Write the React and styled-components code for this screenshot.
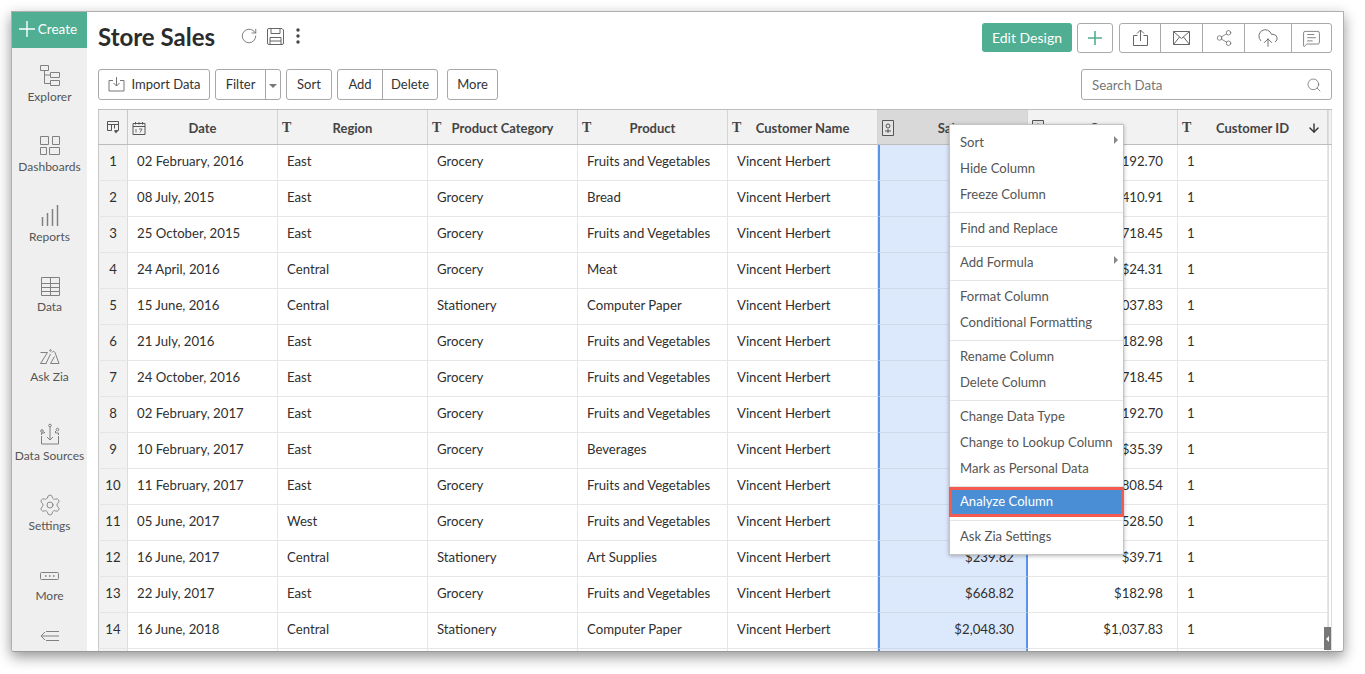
import styled, { createGlobalStyle } from "styled-components";
import {
  RotateCw,
  Search,
  Share2,
  CloudUpload,
  MessageSquareText,
  Settings,
  ArrowDown,
} from "lucide-react";

const GlobalStyle = createGlobalStyle`
  html, body {
    margin: 0;
    background: #fff;
    font-family: Lato, "Open Sans", sans-serif;
    color: #2f2f2f;
  }
  * { box-sizing: border-box; }
`;

const Page = styled.div`
  width: 1365px;
  height: 674px;
  padding: 11px 21px 22px 11px;
  overflow: hidden;
`;

const Window = styled.div`
  display: flex;
  width: 1333px;
  height: 641px;
  border: 1px solid #b0b0b0;
  border-bottom-color: #999;
  border-radius: 0 0 3px 3px;
  background: #fff;
  box-shadow: 0 5px 14px rgba(0, 0, 0, 0.42);
  overflow: hidden;
`;

const Sidebar = styled.aside`
  flex: 0 0 75px;
  display: flex;
  flex-direction: column;
  align-items: stretch;
  background: #efefef;
`;

const CreateButton = styled.div`
  height: 36px;
  margin-bottom: 14px;
  display: flex;
  align-items: center;
  justify-content: center;
  gap: 3px;
  padding: 0 3px 2px 0;
  background: #50ae92;
  color: #fff;
  font-size: 13.5px;
`;

const NavItem = styled.div`
  height: 70px;
  margin-top: ${(p) => p.$gap || 0}px;
  display: flex;
  flex-direction: column;
  align-items: center;
  padding-top: 2px;
  color: #555;
  font-size: 12px;
  white-space: nowrap;
  svg { display: block; height: 24px; }
  span { margin-top: 1px; line-height: 15px; }
`;

const CollapseItem = styled.div`
  display: flex;
  justify-content: center;
  margin-top: -2px;
`;

const Main = styled.main`
  position: relative;
  flex: 1;
  min-width: 0;
  padding: 0 11px;
  overflow: hidden;
`;

const TopBar = styled.div`
  height: 57px;
  display: flex;
  align-items: flex-start;
`;

const Title = styled.h1`
  margin: 11px 0 0;
  font-size: 24px;
  line-height: 28px;
  font-weight: 700;
  color: #2b2b2b;
`;

const TitleIcons = styled.div`
  display: flex;
  align-items: center;
  gap: 9px;
  margin: 14px 0 0 25px;
  height: 20px;
  color: #666;
`;

const DotsSlot = styled.span`
  display: flex;
  margin-left: 3px;
`;

const TopActions = styled.div`
  margin-left: auto;
  display: flex;
  padding-top: 11px;
`;

const EditButton = styled.div`
  width: 90px;
  height: 29px;
  margin-right: 5px;
  display: flex;
  align-items: center;
  justify-content: center;
  border-radius: 3px;
  background: #50ae92;
  color: #fff;
  font-size: 14px;
`;

const PlusButton = styled.div`
  width: 36px;
  height: 30px;
  margin-right: 6px;
  display: flex;
  align-items: center;
  justify-content: center;
  border: 1px solid #aaa;
  border-radius: 3px;
`;

const IconGroup = styled.div`
  display: flex;
  height: 30px;
  border: 1px solid #aaa;
  border-radius: 3px;
`;

const IconCell = styled.div`
  width: ${(p) => p.$w}px;
  display: flex;
  align-items: center;
  justify-content: center;
  color: #666;
  & + & { border-left: 1px solid #aaa; }
`;

const Toolbar = styled.div`
  height: 31px;
  display: flex;
  margin-bottom: 9px;
`;

const ButtonGroup = styled.div`
  display: flex;
  height: 31px;
  margin-right: ${(p) => p.$after ?? 5}px;
  border: 1px solid #a8a8a8;
  border-radius: 3px;
`;

const ToolButton = styled.div`
  width: ${(p) => p.$w}px;
  display: flex;
  align-items: center;
  justify-content: center;
  gap: 7px;
  padding-bottom: 1px;
  font-size: 13px;
  color: #333;
  & + & { border-left: 1px solid #a8a8a8; }
`;

const CaretDown = styled.i`
  width: 0;
  height: 0;
  margin-top: 3px;
  border-left: 4px solid transparent;
  border-right: 4px solid transparent;
  border-top: 4px solid #777;
`;

const SearchBox = styled.div`
  width: 251px;
  height: 31px;
  margin-left: auto;
  display: flex;
  align-items: center;
  justify-content: space-between;
  padding: 0 9px 0 10px;
  border: 1px solid #a8a8a8;
  border-radius: 3px;
  color: #777;
  font-size: 13.3px;
`;

const columns = "30px repeat(8, 150px) 4px";

const Table = styled.div`
  width: 1234px;
  border-left: 1px solid #c8c8c8;
`;

const HeaderRow = styled.div`
  display: grid;
  grid-template-columns: ${columns};
  height: 36px;
  margin-left: -1px;
  border-top: 1px solid #bdbdbd;
  border-bottom: 1px solid #bdbdbd;
  background: #f2f2f2;
`;

const HeaderCell = styled.div`
  display: grid;
  grid-template-columns: 1fr auto 1fr;
  align-items: center;
  padding: 1px 4px 0 4px;
  border-right: 1px solid #d4d4d4;
  background: ${(p) => (p.$selected ? "#d9d9d9" : "#f2f2f2")};
  font-size: 13px;
  font-weight: 700;
  color: #444;
`;

const HeaderLabel = styled.span`
  white-space: nowrap;
  text-align: center;
`;

const TypeMark = styled.span`
  font-family: "Liberation Serif", serif;
  font-size: 14px;
  font-weight: 700;
  color: #444;
  line-height: 1;
`;

const ArrowSlot = styled.span`
  display: flex;
  justify-content: flex-end;
  padding-right: 2px;
  color: #333;
`;

const IndexHead = styled.div`
  display: flex;
  align-items: center;
  justify-content: center;
  border-left: 1px solid #c8c8c8;
  border-right: 1px solid #c8c8c8;
  background: #f2f2f2;
`;

const Row = styled.div`
  display: grid;
  grid-template-columns: ${columns};
  height: 36px;
  margin-left: -1px;
`;

const Cell = styled.div`
  display: flex;
  align-items: center;
  justify-content: ${(p) => (p.$right ? "flex-end" : "flex-start")};
  padding: 0 ${(p) => (p.$right ? 14 : 0)}px 4px ${(p) => (p.$right ? 0 : 9)}px;
  border-right: 1px solid #e6e6e6;
  border-bottom: 1px solid #e6e6e6;
  font-size: 13.2px;
  white-space: nowrap;
  color: #2f2f2f;
`;

const SelectedCell = styled(Cell)`
  background: #dce8fb;
  border-left: 2px solid #5b93e6;
  border-right: 2px solid #5b93e6;
  border-bottom-color: #cfd9ea;
  padding-right: 12px;
`;

const IndexCell = styled.div`
  display: flex;
  align-items: center;
  justify-content: center;
  padding-bottom: 4px;
  border-left: 1px solid #c8c8c8;
  border-right: 1px solid #ddd;
  border-bottom: 1px solid #e6e6e6;
  background: #f2f2f2;
  font-size: 13.2px;
  color: #2f2f2f;
`;

const EdgeCell = styled.div`
  border-right: 1px solid #ddd;
  border-left: 1px solid #ddd;
`;

const Menu = styled.div`
  position: absolute;
  left: 862px;
  top: 112px;
  z-index: 5;
  width: 175px;
  padding: 4px 0 5px;
  background: #fff;
  border: 1px solid #c4c4c4;
  box-shadow: 0 1px 4px rgba(0, 0, 0, 0.28);
`;

const MenuItem = styled.div`
  position: relative;
  height: 26px;
  display: flex;
  align-items: center;
  padding: 0 0 0 10px;
  font-size: 13.1px;
  color: #555;
  white-space: nowrap;
`;

const SubCaret = styled.i`
  position: absolute;
  right: 5px;
  top: 7px;
  width: 0;
  height: 0;
  border-top: 4px solid transparent;
  border-bottom: 4px solid transparent;
  border-left: 4px solid #888;
`;

const MenuDivider = styled.div`
  height: 1px;
  margin: ${(p) => p.$top ?? 5}px 0 2px;
  background: #e4e4e4;
`;

const ActiveItem = styled.div`
  height: 30px;
  margin: -2px -1px 0;
  display: flex;
  align-items: center;
  padding: 0 0 2px 8px;
  background: #4a8fd6;
  border: 3px solid #f45b50;
  color: #fff;
  font-size: 13.1px;
`;

const SplitHandle = styled.div`
  position: absolute;
  right: 12px;
  bottom: 1px;
  width: 7px;
  height: 23px;
  display: flex;
  align-items: center;
  justify-content: center;
  background: #777;
  &::before {
    content: "";
    border-top: 3px solid transparent;
    border-bottom: 3px solid transparent;
    border-right: 3px solid #fff;
  }
`;

const line = { fill: "none", stroke: "#808080", strokeWidth: 1 };

const ExplorerIcon = () => (
  <svg width="22" height="24" viewBox="0 0 22 24" {...line}>
    <path d="M1.5 1.5h8v5h-8zM11.5 8.5h9v5h-9zM11.5 16.5h9v5h-9zM5.5 6.5v13h6M5.5 11h6" />
  </svg>
);
const DashboardIcon = () => (
  <svg width="22" height="24" viewBox="0 0 22 24" {...line}>
    <path d="M1.5 2.5h8v8h-8zM13.5 2.5h7v8h-7zM1.5 13.5h6v7h-6zM10.5 13.5h10v7h-10z" />
  </svg>
);
const ReportsIcon = () => (
  <svg width="22" height="24" viewBox="0 0 22 24" {...line} strokeWidth="1.5">
    <path d="M3.500 22v-9M8.500 22V9M13.500 22V5M18.500 22V1" />
  </svg>
);
const DataIcon = () => (
  <svg width="22" height="24" viewBox="0 0 22 24" {...line}>
    <path d="M2.500 3.500h18v18h-18zM2.500 9.500h18M2.500 13.500h18M2.500 17.500h18M11.500 3.500v18" />
  </svg>
);
const ZiaIcon = () => (
  <svg width="22" height="24" viewBox="0 0 22 24" {...line}>
    <path d="M1.500 8.500h7l-7 11h6M11.500 10l-4.500 9.500M13 8.500c1-1.500 2-1.500 3 0l4 11h-8.500l4-7" />
    <circle cx="11.500" cy="6.500" r="0.800" />
  </svg>
);
const SourcesIcon = () => (
  <svg width="24" height="24" viewBox="0 0 24 24" {...line}>
    <path d="M3.500 13v8h17v-8M3.500 12v-2h3v-1M20.500 12v-2h-3V8M12 4v13M9 14l3 3 3-3" />
    <circle cx="4" cy="8" r="1.300" />
    <circle cx="12" cy="2.500" r="1.300" />
    <circle cx="19.500" cy="6.500" r="1.300" />
  </svg>
);
const MoreIcon = () => (
  <svg width="22" height="24" viewBox="0 0 22 24" {...line}>
    <rect x="1.500" y="9.500" width="18" height="7" rx="1" />
    <path d="M6 13h1.500M10 13h1.500M14 13h1.500" strokeWidth="1.500" />
  </svg>
);
const CollapseIcon = () => (
  <svg width="20" height="14" viewBox="0 0 20 14" {...line}>
    <path d="M5 3 1 7l4 4M1 7h18M6 2.500h13M6 11.500h13" />
  </svg>
);
const SaveIcon = () => (
  <svg width="17" height="17" viewBox="0 0 17 17" fill="none" stroke="#666" strokeWidth="1">
    <path d="M2 .5h13l1.500 1.500v13a1.500 1.500 0 0 1-1.500 1.500H2A1.500 1.500 0 0 1 .5 15V2A1.500 1.500 0 0 1 2 .5z" />
    <path d="M4 .5v5h9v-5M3 9.500h11v7M3 9.500v7M3 13h11" />
  </svg>
);
const DotsIcon = () => (
  <svg width="4" height="16" viewBox="0 0 4 16" fill="#444">
    <circle cx="2" cy="2" r="1.700" />
    <circle cx="2" cy="8" r="1.700" />
    <circle cx="2" cy="14" r="1.700" />
  </svg>
);
const PlusIcon = ({ size, color, weight }) => (
  <svg width={size} height={size} viewBox="0 0 14 14" stroke={color} strokeWidth={weight}>
    <path d="M7 0v14M0 7h14" />
  </svg>
);
const ShareBoxIcon = () => (
  <svg width="17" height="18" viewBox="0 0 17 18" fill="none" stroke="#666">
    <path d="M5.500 6.500h-4v10h14v-10h-4M8.500 12V1M5 4.500 8.500 1 12 4.500" />
  </svg>
);
const MailIcon = () => (
  <svg width="17" height="14" viewBox="0 0 17 14" fill="none" stroke="#666">
    <path d="M.5.500h16v13H.5zM.5.500l8 7 8-7M.5 13.500l6-7.500M16.500 13.500l-6-7.500" />
  </svg>
);
const ImportIcon = () => (
  <svg width="17" height="16" viewBox="0 0 17 16" fill="none" stroke="#777">
    <path d="M5 4.500H1v10.500h15V4.500h-4M8.500 1v9M5.500 7l3 3 3-3" />
  </svg>
);
const ColumnsIcon = () => (
  <svg width="14" height="14" viewBox="0 0 14 14" fill="none" stroke="#555">
    <path d="M1.500 1.500h11v9h-4M1.500 1.500v9h4M1.500 4.500h11M5.500 4.500v6M8.500 4.500v4" />
    <path d="M8 11h4l-2 2.500z" fill="#555" stroke="none" />
  </svg>
);
const CalendarIcon = () => (
  <svg width="14" height="14" viewBox="0 0 14 14" fill="none" stroke="#555">
    <path d="M1 2.500h12v11H1zM1 5.500h12M3.500 1v2.500M7 1v2.500M10.500 1v2.500" />
    <path d="M4 8v3.500M7 8h3l-2 3.500" strokeWidth="0.800" />
  </svg>
);
const CurrencyIcon = () => (
  <svg width="12" height="16" viewBox="0 0 12 16" fill="#e4e4e4" stroke="#555">
    <path d="M.5.500h11v15H.5z" />
    <circle cx="6" cy="6" r="2" fill="none" />
    <path d="M6 9v4M3 11h6" />
  </svg>
);

const navItems = [
  { label: "Explorer", icon: <ExplorerIcon /> },
  { label: "Dashboards", icon: <DashboardIcon /> },
  { label: "Reports", icon: <ReportsIcon /> },
  { label: "Data", icon: <DataIcon /> },
  { label: "Ask Zia", icon: <ZiaIcon /> },
  { label: "Data Sources", icon: <SourcesIcon />, gap: 9 },
  { label: "Settings", icon: <Settings size={24} strokeWidth={0.9} color="#808080" /> },
  { label: "More", icon: <MoreIcon /> },
];

const FV = "Fruits and Vegetables";
const rows = [
  ["02 February, 2016", "East", "Grocery", FV, "", "$192.70"],
  ["08 July, 2015", "East", "Grocery", "Bread", "", "$410.91"],
  ["25 October, 2015", "East", "Grocery", FV, "", "$718.45"],
  ["24 April, 2016", "Central", "Grocery", "Meat", "", "$24.31"],
  ["15 June, 2016", "Central", "Stationery", "Computer Paper", "", "$1,037.83"],
  ["21 July, 2016", "East", "Grocery", FV, "", "$182.98"],
  ["24 October, 2016", "East", "Grocery", FV, "", "$718.45"],
  ["02 February, 2017", "East", "Grocery", FV, "", "$192.70"],
  ["10 February, 2017", "East", "Grocery", "Beverages", "", "$35.39"],
  ["11 February, 2017", "East", "Grocery", FV, "", "$808.54"],
  ["05 June, 2017", "West", "Grocery", FV, "", "$528.50"],
  ["16 June, 2017", "Central", "Stationery", "Art Supplies", "$239.82", "$39.71"],
  ["22 July, 2017", "East", "Grocery", FV, "$668.82", "$182.98"],
  ["16 June, 2018", "Central", "Stationery", "Computer Paper", "$2,048.30", "$1,037.83"],
  ["", "", "", "", "", ""],
];

const menuGroups = [
  [{ label: "Sort", sub: true }, { label: "Hide Column" }, { label: "Freeze Column" }],
  [{ label: "Find and Replace" }],
  [{ label: "Add Formula", sub: true }],
  [{ label: "Format Column" }, { label: "Conditional Formatting" }],
  [{ label: "Rename Column" }, { label: "Delete Column" }],
  [{ label: "Change Data Type" }, { label: "Change to Lookup Column" }, { label: "Mark as Personal Data" }],
];

const App = () => {
  return (
    <>
      <GlobalStyle />
      <Page>
        <Window>
          <Sidebar>
            <CreateButton>
              <PlusIcon size={16} color="#fff" weight={1.2} />
              Create
            </CreateButton>
            {navItems.map((item) => (
              <NavItem key={item.label} $gap={item.gap}>
                {item.icon}
                <span>{item.label}</span>
              </NavItem>
            ))}
            <CollapseItem>
              <CollapseIcon />
            </CollapseItem>
          </Sidebar>

          <Main>
            <TopBar>
              <Title>Store Sales</Title>
              <TitleIcons>
                <RotateCw size={18} strokeWidth={1.1} />
                <SaveIcon />
                <DotsSlot>
                  <DotsIcon />
                </DotsSlot>
              </TitleIcons>
              <TopActions>
                <EditButton>Edit Design</EditButton>
                <PlusButton>
                  <PlusIcon size={14} color="#50ae92" weight={1.6} />
                </PlusButton>
                <IconGroup>
                  <IconCell $w={40}>
                    <ShareBoxIcon />
                  </IconCell>
                  <IconCell $w={42}>
                    <MailIcon />
                  </IconCell>
                  <IconCell $w={42}>
                    <Share2 size={18} strokeWidth={1} />
                  </IconCell>
                  <IconCell $w={47}>
                    <CloudUpload size={22} strokeWidth={1} />
                  </IconCell>
                  <IconCell $w={40}>
                    <MessageSquareText size={19} strokeWidth={1} />
                  </IconCell>
                </IconGroup>
              </TopActions>
            </TopBar>

            <Toolbar>
              <ButtonGroup>
                <ToolButton $w={110}>
                  <ImportIcon />
                  Import Data
                </ToolButton>
              </ButtonGroup>
              <ButtonGroup>
                <ToolButton $w={49}>Filter</ToolButton>
                <ToolButton $w={15}>
                  <CaretDown />
                </ToolButton>
              </ButtonGroup>
              <ButtonGroup>
                <ToolButton $w={44}>Sort</ToolButton>
              </ButtonGroup>
              <ButtonGroup $after={9}>
                <ToolButton $w={44}>Add</ToolButton>
                <ToolButton $w={55}>Delete</ToolButton>
              </ButtonGroup>
              <ButtonGroup>
                <ToolButton $w={49}>More</ToolButton>
              </ButtonGroup>
              <SearchBox>
                Search Data
                <Search size={16} strokeWidth={1} color="#555" />
              </SearchBox>
            </Toolbar>

            <Table>
              <HeaderRow>
                <IndexHead>
                  <ColumnsIcon />
                </IndexHead>
                <HeaderCell>
                  <CalendarIcon />
                  <HeaderLabel>Date</HeaderLabel>
                </HeaderCell>
                <HeaderCell>
                  <TypeMark>T</TypeMark>
                  <HeaderLabel>Region</HeaderLabel>
                </HeaderCell>
                <HeaderCell>
                  <TypeMark>T</TypeMark>
                  <HeaderLabel>Product Category</HeaderLabel>
                </HeaderCell>
                <HeaderCell>
                  <TypeMark>T</TypeMark>
                  <HeaderLabel>Product</HeaderLabel>
                </HeaderCell>
                <HeaderCell>
                  <TypeMark>T</TypeMark>
                  <HeaderLabel>Customer Name</HeaderLabel>
                </HeaderCell>
                <HeaderCell $selected>
                  <CurrencyIcon />
                  <HeaderLabel>Sales</HeaderLabel>
                </HeaderCell>
                <HeaderCell>
                  <CurrencyIcon />
                  <HeaderLabel>Cost</HeaderLabel>
                </HeaderCell>
                <HeaderCell>
                  <TypeMark>T</TypeMark>
                  <HeaderLabel>Customer ID</HeaderLabel>
                  <ArrowSlot>
                    <ArrowDown size={14} strokeWidth={2.4} />
                  </ArrowSlot>
                </HeaderCell>
                <EdgeCell />
              </HeaderRow>
              {rows.map((r, i) => (
                <Row key={i}>
                  <IndexCell>{r[0] ? i + 1 : ""}</IndexCell>
                  <Cell>{r[0]}</Cell>
                  <Cell>{r[1]}</Cell>
                  <Cell>{r[2]}</Cell>
                  <Cell>{r[3]}</Cell>
                  <Cell>{r[0] ? "Vincent Herbert" : ""}</Cell>
                  <SelectedCell $right>{r[4]}</SelectedCell>
                  <Cell $right>{r[5]}</Cell>
                  <Cell>{r[0] ? "1" : ""}</Cell>
                  <EdgeCell />
                </Row>
              ))}
            </Table>

            <Menu>
              {menuGroups.map((group, g) => (
                <div key={g}>
                  {group.map((item) => (
                    <MenuItem key={item.label}>
                      {item.label}
                      {item.sub && <SubCaret />}
                    </MenuItem>
                  ))}
                  <MenuDivider />
                </div>
              ))}
              <ActiveItem>Analyze Column</ActiveItem>
              <MenuDivider $top={3} />
              <MenuItem>Ask Zia Settings</MenuItem>
            </Menu>

            <SplitHandle />
          </Main>
        </Window>
      </Page>
    </>
  );
};

export default App;
